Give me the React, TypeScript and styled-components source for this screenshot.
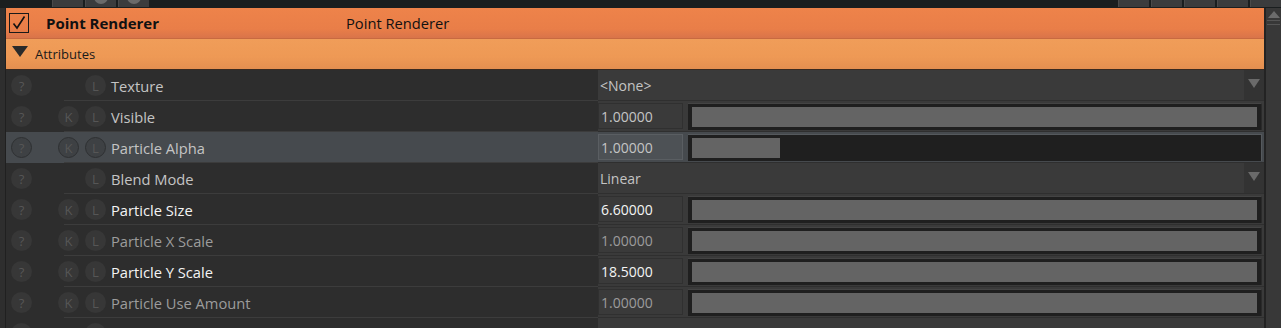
import styled, { createGlobalStyle } from 'styled-components';

const GlobalStyle = createGlobalStyle`
  html, body {
    margin: 0;
    padding: 0;
    background: #1b1f20;
    overflow: hidden;
  }
  body {
    font-family: "Open Sans", "Noto Sans", sans-serif;
  }
`;

const Page = styled.div`
  width: 1281px;
  height: 328px;
  display: flex;
  flex-direction: column;
  overflow: hidden;
`;

const TopStrip = styled.div`
  height: 8px;
  flex-shrink: 0;
  display: flex;
  background: #1a1e1f;
  padding-left: 52px;
`;

const StripGroup = styled.div`
  display: flex;
  gap: 2px;
`;

const StripButton = styled.div<{ round?: boolean }>`
  width: 30px;
  height: 7px;
  background: #3b3c3d;
  border-left: 1px solid #4a4a4a;
  position: relative;
  overflow: hidden;
  &::after {
    content: '';
    display: ${(p) => (p.round ? 'block' : 'none')};
    position: absolute;
    left: 8px;
    top: -10px;
    width: 14px;
    height: 14px;
    border-radius: 50%;
    background: #6a6a6a;
  }
`;

const Spacer = styled.div`
  flex: 1;
`;

const Main = styled.div`
  flex: 1;
  display: flex;
  min-height: 0;
`;

const Gutter = styled.div`
  width: 5px;
  background: #2e2e2e;
  border-right: 1px solid #202020;
`;

const Panel = styled.div`
  width: 1258px;
  display: flex;
  flex-direction: column;
  background: #2d2d2d;
  overflow: hidden;
`;

const ScrollBar = styled.div`
  width: 15px;
  background: #383838;
  border-left: 2px solid #232323;
  display: flex;
  flex-direction: column;
  align-items: center;
  padding-top: 3px;
`;

const ScrollUp = styled.div`
  width: 0;
  height: 0;
  border-left: 6px solid transparent;
  border-right: 6px solid transparent;
  border-bottom: 7px solid #6c6c6c;
`;

const ScrollLine = styled.div`
  width: 13px;
  height: 3px;
  margin-top: 2px;
  border-top: 1px solid #555;
  border-bottom: 1px solid #555;
`;

const Header = styled.div`
  height: 31px;
  flex-shrink: 0;
  display: flex;
  align-items: center;
  background: linear-gradient(#ee834a, #e97e48 70%, #d9744a);
  border-bottom: 1px solid #c86a40;
  box-sizing: border-box;
  color: #111;
  font-size: 14.7px;
`;

const CheckBox = styled.div`
  width: 18px;
  height: 18px;
  margin-left: 3px;
  border: 1px solid #1a1a1a;
  display: flex;
  align-items: center;
  justify-content: center;
`;

const HeaderTitle = styled.div`
  width: 300px;
  margin-left: 17px;
  font-weight: 700;
  font-size: 15px;
`;

const HeaderName = styled.div`
  margin-left: 0;
`;

const Section = styled.div`
  height: 31px;
  flex-shrink: 0;
  display: flex;
  align-items: center;
  background: linear-gradient(#f09d59, #ee9955 60%, #e48f50);
  border-bottom: 1px solid #3a2a20;
  box-sizing: border-box;
  color: #1a1a1a;
  font-size: 13px;
`;

const SectionArrow = styled.div`
  width: 0;
  height: 0;
  margin: -6px 7px 0 6px;
  border-left: 8px solid transparent;
  border-right: 8px solid transparent;
  border-top: 11px solid #2a2a2a;
`;

const Row = styled.div<{ active?: boolean }>`
  height: 31px;
  flex-shrink: 0;
  display: flex;
  background: ${(p) => (p.active ? '#464a4e' : '#2d2d2d')};
`;

const LabelCell = styled.div`
  width: 592px;
  display: flex;
  align-items: center;
  position: relative;
  &::after {
    content: '';
    position: absolute;
    left: 58px;
    right: 0;
    bottom: 0;
    height: 1px;
    background: #3c3c3c;
  }
`;

const Badge = styled.div<{ hidden?: boolean; active?: boolean }>`
  width: 21px;
  height: 21px;
  border-radius: 50%;
  background: ${(p) => (p.active ? '#3e4144' : '#373737')};
  border: ${(p) => (p.active ? '1px solid #2e3032' : '1px solid transparent')};
  box-sizing: border-box;
  color: #565656;
  font-size: 13px;
  display: flex;
  align-items: center;
  justify-content: center;
  visibility: ${(p) => (p.hidden ? 'hidden' : 'visible')};
`;

const BadgeHelp = styled(Badge)`
  margin-left: 5px;
`;

const BadgeKey = styled(Badge)`
  margin-left: 26px;
`;

const BadgeLink = styled(Badge)`
  margin-left: 6px;
`;

const Label = styled.div<{ tone: 'light' | 'bright' | 'dim' }>`
  margin-left: 5px;
  font-size: 14.7px;
  color: ${(p) => (p.tone === 'bright' ? '#f4f4f4' : p.tone === 'dim' ? '#9c9c9c' : '#c4c4c4')};
`;

const ValueCell = styled.div<{ active?: boolean }>`
  flex: 1;
  display: flex;
  align-items: center;
  background: ${(p) => (p.active ? '#464a4e' : '#3a3a3a')};
  border-bottom: 1px solid #2f2f2f;
  box-sizing: border-box;
`;

const NumberBox = styled.div<{ tone: 'light' | 'bright' | 'dim'; active?: boolean }>`
  width: 85px;
  height: 26px;
  box-sizing: border-box;
  background: ${(p) => (p.active ? '#4d5155' : '#3a3a3a')};
  border: 1px solid ${(p) => (p.active ? '#5a5e62' : '#303030')};
  padding-left: 2px;
  display: flex;
  align-items: center;
  font-size: 14px;
  color: ${(p) => (p.tone === 'bright' ? '#f4f4f4' : p.tone === 'dim' ? '#9c9c9c' : '#c4c4c4')};
`;

const Slider = styled.div<{ active?: boolean }>`
  width: 574px;
  height: 27px;
  margin-left: 5px;
  box-sizing: border-box;
  background: #1f1f1f;
  border-top: 1px solid ${(p) => (p.active ? '#55595d' : '#444')};
  border-right: 1px solid ${(p) => (p.active ? '#55595d' : '#2a2a2a')};
  padding: 3px 4px 3px 4px;
  display: flex;
`;

const SliderFill = styled.div`
  height: 100%;
  background: #646464;
`;

const DropText = styled.div`
  flex: 1;
  padding-left: 2px;
  font-size: 14px;
  color: #c4c4c4;
`;

const DropButton = styled.div`
  width: 20px;
  height: 100%;
  background: #333333;
  display: flex;
  justify-content: center;
  padding-top: 9px;
  box-sizing: border-box;
`;

const DropArrow = styled.div`
  width: 0;
  height: 0;
  border-left: 6px solid transparent;
  border-right: 6px solid transparent;
  border-top: 9px solid #6a6a6a;
`;

const SmallCheck = styled.div`
  width: 17px;
  height: 17px;
  margin-top: 24px;
  box-sizing: border-box;
  border: 1px solid #111;
  background: #3c3c3c;
  align-self: flex-start;
`;

type Tone = 'light' | 'bright' | 'dim';

interface Attr {
  name: string;
  tone: Tone;
  keyable: boolean;
  kind: 'drop' | 'number' | 'check';
  value?: string;
  fill?: number;
  active?: boolean;
}

const attrs: Attr[] = [
  { name: 'Texture', tone: 'light', keyable: false, kind: 'drop', value: '<None>' },
  { name: 'Visible', tone: 'light', keyable: true, kind: 'number', value: '1.00000', fill: 1 },
  { name: 'Particle Alpha', tone: 'light', keyable: true, kind: 'number', value: '1.00000', fill: 0.155, active: true },
  { name: 'Blend Mode', tone: 'light', keyable: false, kind: 'drop', value: 'Linear' },
  { name: 'Particle Size', tone: 'bright', keyable: true, kind: 'number', value: '6.60000', fill: 1 },
  { name: 'Particle X Scale', tone: 'dim', keyable: true, kind: 'number', value: '1.00000', fill: 1 },
  { name: 'Particle Y Scale', tone: 'bright', keyable: true, kind: 'number', value: '18.5000', fill: 1 },
  { name: 'Particle Use Amount', tone: 'dim', keyable: true, kind: 'number', value: '1.00000', fill: 1 },
  { name: '', tone: 'light', keyable: false, kind: 'check' },
];

function AttrRow({ attr }: { attr: Attr }): JSX.Element {
  // the last row is only peeking in at the bottom edge, its badge letters are out of view
  const peek = attr.kind === 'check';
  return (
    <Row active={attr.active}>
      <LabelCell>
        <BadgeHelp active={attr.active}>{peek ? '' : '?'}</BadgeHelp>
        <BadgeKey hidden={!attr.keyable} active={attr.active}>K</BadgeKey>
        <BadgeLink active={attr.active}>{peek ? '' : 'L'}</BadgeLink>
        <Label tone={attr.tone}>{attr.name}</Label>
      </LabelCell>
      <ValueCell active={attr.active}>
        {attr.kind === 'drop' && (
          <>
            <DropText>{attr.value}</DropText>
            <DropButton>
              <DropArrow />
            </DropButton>
          </>
        )}
        {attr.kind === 'number' && (
          <>
            <NumberBox tone={attr.tone} active={attr.active}>{attr.value}</NumberBox>
            <Slider active={attr.active}>
              <SliderFill style={{ width: `${(attr.fill ?? 0) * 100}%` }} />
            </Slider>
          </>
        )}
        {attr.kind === 'check' && <SmallCheck />}
      </ValueCell>
    </Row>
  );
}

export default function App(): JSX.Element {
  return (
    <Page>
      <GlobalStyle />
      <TopStrip>
        <StripGroup>
          <StripButton />
          <StripButton round />
          <StripButton round />
        </StripGroup>
        <Spacer />
        <StripGroup>
          <StripButton />
          <StripButton />
          <StripButton />
          <StripButton />
          <StripButton />
        </StripGroup>
      </TopStrip>
      <Main>
        <Gutter />
        <Panel>
          <Header>
            <CheckBox>
              <svg width="16" height="16" viewBox="0 0 16 16">
                <path d="M2.5 8.5 L6 13 L13.5 1.5" fill="none" stroke="#111" strokeWidth="1.6" />
              </svg>
            </CheckBox>
            <HeaderTitle>Point Renderer</HeaderTitle>
            <HeaderName>Point Renderer</HeaderName>
          </Header>
          <Section>
            <SectionArrow />
            Attributes
          </Section>
          {attrs.map((a, i) => (
            <AttrRow key={i} attr={a} />
          ))}
        </Panel>
        <ScrollBar>
          <ScrollUp />
          <ScrollLine />
        </ScrollBar>
      </Main>
    </Page>
  );
}
